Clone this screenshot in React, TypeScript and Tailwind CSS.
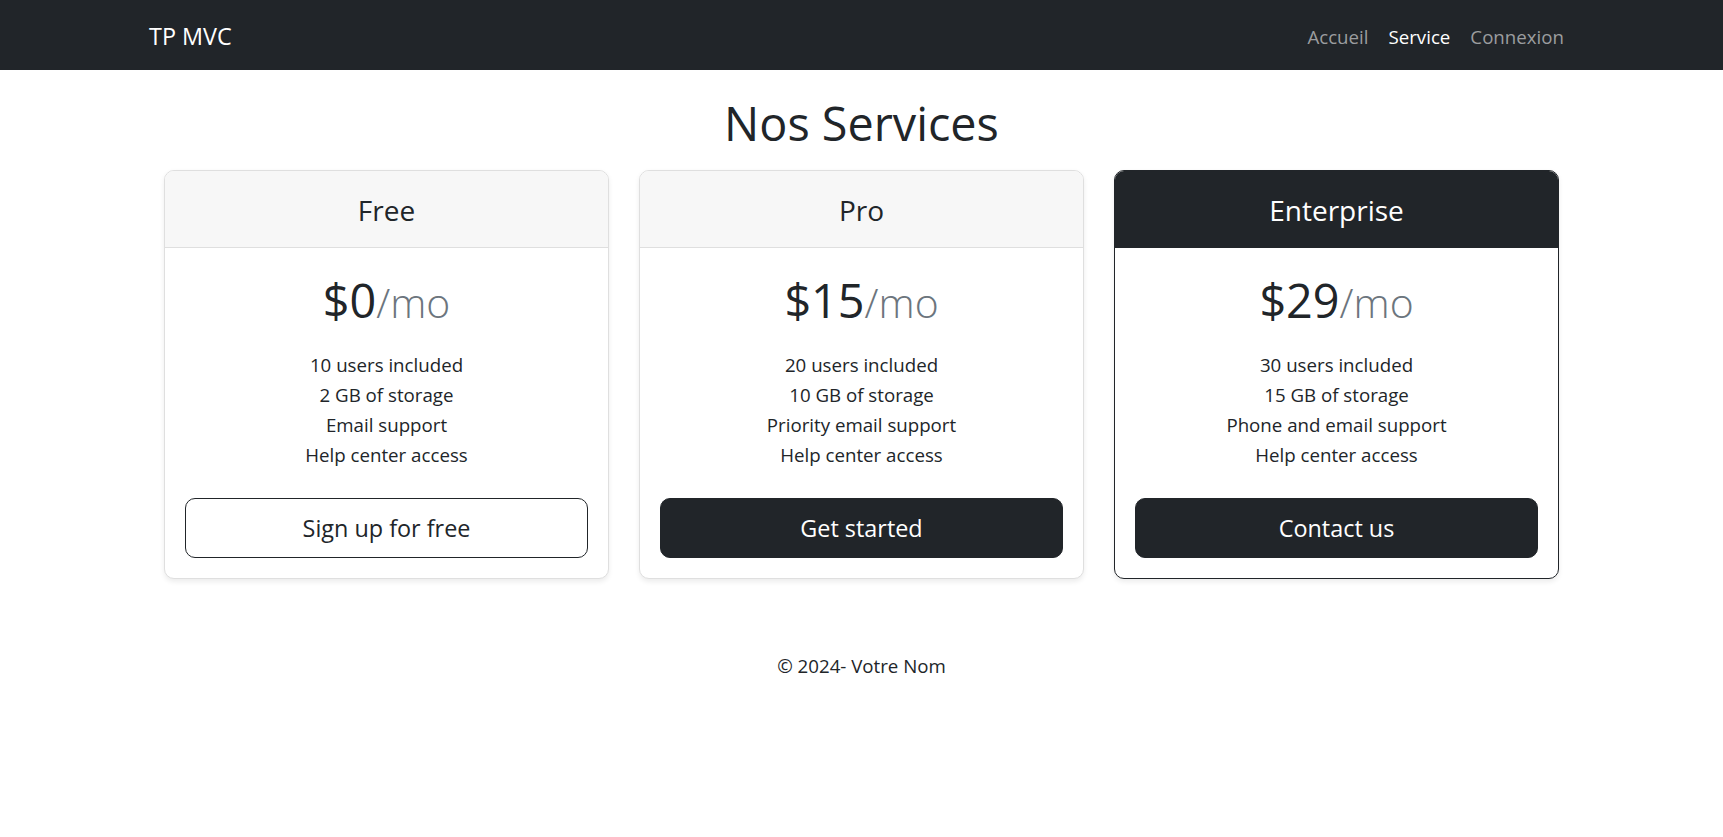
import React from "react";

type Plan = {
  name: string;
  price: string;
  features: string[];
  cta: string;
  variant: "outline" | "dark";
  highlight?: boolean;
};

const plans: Plan[] = [
  {
    name: "Free",
    price: "$0",
    features: ["10 users included", "2 GB of storage", "Email support", "Help center access"],
    cta: "Sign up for free",
    variant: "outline",
  },
  {
    name: "Pro",
    price: "$15",
    features: ["20 users included", "10 GB of storage", "Priority email support", "Help center access"],
    cta: "Get started",
    variant: "dark",
  },
  {
    name: "Enterprise",
    price: "$29",
    features: ["30 users included", "15 GB of storage", "Phone and email support", "Help center access"],
    cta: "Contact us",
    variant: "dark",
    highlight: true,
  },
];

function PricingCard({ plan }: { plan: Plan }) {
  return (
    <div
      className={
        plan.highlight
          ? "flex flex-col rounded-[10px] border border-[#212529] bg-white shadow-[0_2.5px_5px_rgba(0,0,0,0.075)] overflow-hidden"
          : "flex flex-col rounded-[10px] border border-[#dfdfdf] bg-white shadow-[0_2.5px_5px_rgba(0,0,0,0.075)] overflow-hidden"
      }
    >
      <div
        className={
          plan.highlight
            ? "bg-[#212529] text-white border-b border-[#212529] pt-[21px] pb-[19px] text-center"
            : "bg-[#f7f7f7] text-[#212529] border-b border-[#dfdfdf] pt-[21px] pb-[19px] text-center"
        }
      >
        <h4 className="text-[28px] leading-[36px] font-normal">{plan.name}</h4>
      </div>
      <div className="p-[20px] text-center">
        <h1 className="h-[65px] overflow-visible text-[46.75px] leading-[65px] font-normal text-[#212529]">
          {plan.price}
          <small className="text-[40.9px] font-light text-[#6c757d]">/mo</small>
        </h1>
        <ul className="mt-[17px] mb-[28px] text-[18.7px] leading-[30px] text-[#212529]">
          {plan.features.map((f) => (
            <li key={f}>{f}</li>
          ))}
        </ul>
        <button
          className={
            plan.variant === "outline"
              ? "w-full h-[59.5px] rounded-[10px] border border-[#212529] bg-white text-[#212529] text-[23.4px] leading-[37.5px] pt-[2px]"
              : "w-full h-[59.5px] rounded-[10px] border border-[#212529] bg-[#212529] text-white text-[23.4px] leading-[37.5px] pt-[2px]"
          }
        >
          {plan.cta}
        </button>
      </div>
    </div>
  );
}

export default function App() {
  return (
    <div className="min-h-screen bg-white font-['Open_Sans',sans-serif] text-[#212529]">
      <nav className="h-[70px] bg-[#212529]">
        <div className="mx-auto flex h-full w-[1425px] items-center justify-between pt-[4px]">
          <a className="text-[23.4px] leading-[37.5px] text-white">TP MVC</a>
          <ul className="flex items-center text-[18.7px] leading-[30px]">
            <li><a className="px-[10px] text-[#9b9d9f]">Accueil</a></li>
            <li><a className="px-[10px] text-white">Service</a></li>
            <li><a className="pl-[10px] pr-[10px] text-[#9b9d9f]">Connexion</a></li>
          </ul>
        </div>
      </nav>
      <main className="mx-auto w-[1425px] px-[15px]">
        <h1 className="mt-[23px] mb-[17px] text-center text-[46.75px] leading-[60px] font-normal">
          Nos Services
        </h1>
        <div className="grid grid-cols-3 gap-[30px]">
          {plans.map((p) => (
            <PricingCard key={p.name} plan={p} />
          ))}
        </div>
        <footer className="pt-[72px] text-center text-[18.7px] leading-[30px]">
          © 2024- Votre Nom
        </footer>
      </main>
    </div>
  );
}
